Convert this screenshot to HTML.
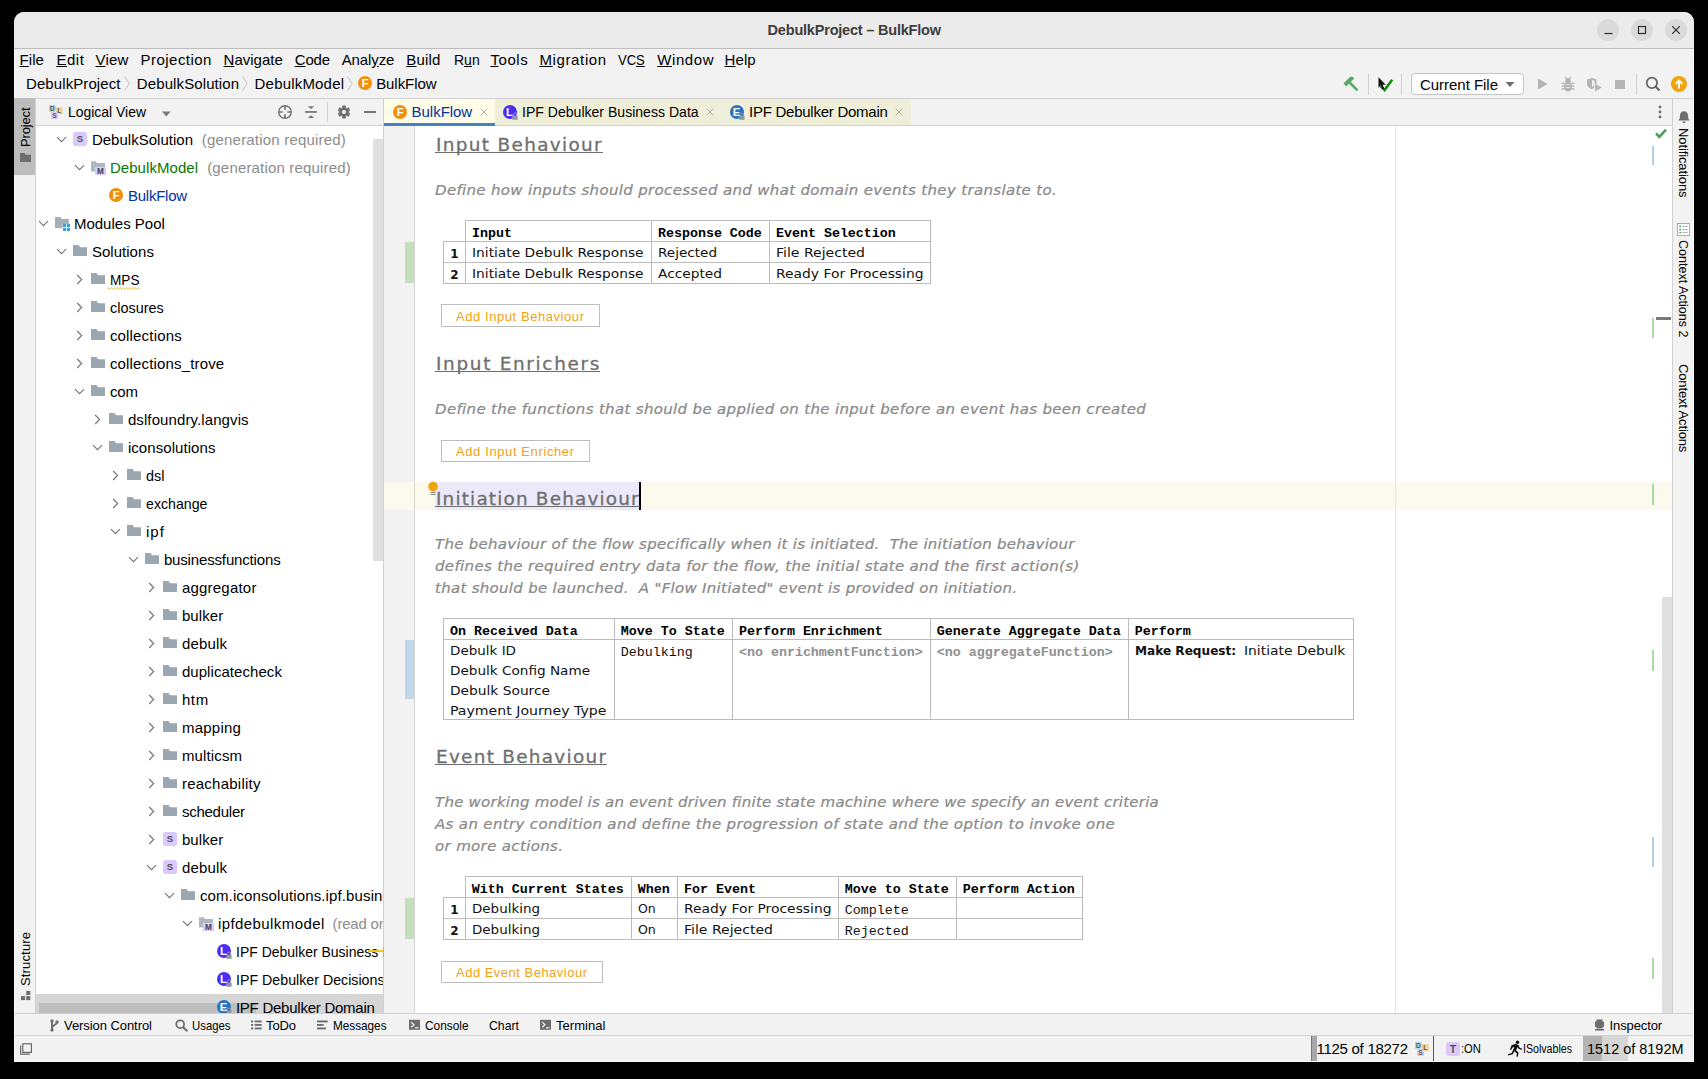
<!DOCTYPE html>
<html lang="en"><head><meta charset="utf-8"><title>DebulkProject – BulkFlow</title>
<style>
html,body{margin:0;padding:0;background:#000;}
body{width:1708px;height:1079px;position:relative;overflow:hidden;font-family:"Liberation Sans",sans-serif;}
.t{position:absolute;white-space:pre;line-height:1;}
div,svg{box-sizing:border-box;}
</style></head><body>
<div style="position:absolute;left:14px;top:12px;width:1680px;height:1050px;background:#f2f2f2;border-radius:10px 10px 0 0;"></div>
<div style="position:absolute;left:14px;top:12px;width:1680px;height:36px;background:#ebebeb;border-radius:10px 10px 0 0;"></div>
<div style="position:absolute;left:14px;top:48px;width:1680px;height:1px;background:#bdbdbd;"></div>
<div style="position:absolute;left:1597px;top:19px;width:22px;height:22px;background:#dadada;border-radius:50%;"></div>
<div style="position:absolute;left:1631px;top:19px;width:22px;height:22px;background:#dadada;border-radius:50%;"></div>
<div style="position:absolute;left:1665px;top:19px;width:22px;height:22px;background:#dadada;border-radius:50%;"></div>
<svg style="position:absolute;left:1597px;top:19px" width="90" height="22" viewBox="0 0 90 22"><g stroke="#2e2e2e" stroke-width="1.2" fill="none"><path d="M7.5 14.5h8"/><rect x="41.5" y="7.5" width="7" height="7"/><path d="M75.2 7.2l7.6 7.6M82.8 7.2l-7.6 7.6"/></g></svg>
<svg style="position:absolute;left:123.2px;top:75px" width="8" height="18" viewBox="0 0 8 18"><path d="M1.500 1.600L6.200 8.600L1.500 15.600" stroke="#c4c4c4" stroke-width="1" fill="none"/></svg>
<svg style="position:absolute;left:241.3px;top:75px" width="8" height="18" viewBox="0 0 8 18"><path d="M1.500 1.600L6.200 8.600L1.500 15.600" stroke="#c4c4c4" stroke-width="1" fill="none"/></svg>
<svg style="position:absolute;left:346.4px;top:75px" width="8" height="18" viewBox="0 0 8 18"><path d="M1.500 1.600L6.200 8.600L1.500 15.600" stroke="#c4c4c4" stroke-width="1" fill="none"/></svg>
<svg style="position:absolute;left:357px;top:75px" width="16" height="16" viewBox="0 0 16 16"><circle cx="8" cy="8" r="7" fill="#f0900a"/><text x="8.3" y="12" text-anchor="middle" font-family="Liberation Sans, sans-serif" font-weight="bold" font-size="11.3" fill="#fff">F</text></svg>
<div style="position:absolute;left:14px;top:98px;width:1680px;height:1px;background:#d1d1d1;"></div>
<svg style="position:absolute;left:1343px;top:76px" width="17" height="17" viewBox="0 0 17 17"><g transform="rotate(-45 8.5 8.5)"><rect x="7.3" y="6" width="2.6" height="11" rx="0.8" fill="#59a869"/><path d="M3.5 2.2h9.5l1.6 1.6v2.4h-11.1z" fill="#59a869"/></g></svg>
<div style="position:absolute;left:1368px;top:74px;width:1px;height:21px;background:#d0d0d0;"></div>
<svg style="position:absolute;left:1377px;top:74px" width="18" height="20" viewBox="0 0 18 20"><path d="M3.600 12.400l4 3.600L15.200 5.800" stroke="#138a13" stroke-width="2.600" fill="none"/><path d="M1.500 3.200v10.500l2.400-2.200l1.800 3.800l1.600-.800l-1.800-3.700h3.200z" fill="#111"/></svg>
<div style="position:absolute;left:1401px;top:74px;width:1px;height:21px;background:#d0d0d0;"></div>
<div style="position:absolute;left:1411px;top:73px;width:113px;height:22px;background:#fff;border:1px solid #c4c4c4;border-radius:4px;"></div>
<svg style="position:absolute;left:1505px;top:81px" width="10" height="7" viewBox="0 0 10 7"><path d="M0.5 1h9L5 6z" fill="#6e6e6e"/></svg>
<svg style="position:absolute;left:1536px;top:77px" width="14" height="14" viewBox="0 0 14 14"><path d="M2 1.5v11l9.5-5.5z" fill="#b4b4b4"/></svg>
<svg style="position:absolute;left:1561px;top:76px" width="14" height="16" viewBox="0 0 14 16"><g fill="#b4b4b4"><ellipse cx="7" cy="10.200" rx="4.100" ry="5.200"/><circle cx="7" cy="4.600" r="2.600"/></g><g stroke="#b4b4b4" stroke-width="1.300" fill="none"><path d="M0.600 7.400h3M0.600 10.200h2.600M0.600 13h3M13.400 7.400h-3M13.400 10.200h-2.600M13.400 13h-3"/><path stroke-width="1.100" d="M3.800 0.600l1.900 2.700M10.200 0.600l-1.900 2.700"/></g><g stroke="#e9e9e9" stroke-width="0.800"><path d="M4.400 8.800h5.200M4.400 11.500h5.200"/></g></svg>
<svg style="position:absolute;left:1586px;top:76px" width="17" height="17" viewBox="0 0 17 17"><path d="M1 3.500L5.800 2L10.600 3.500V7.500C10.600 10.500 8 12.300 5.800 13.200C3.600 12.300 1 10.500 1 7.500z" fill="#b4b4b4"/><path d="M6 4L8.600 4.900V7.500C8.600 9 7.400 10.200 6 11z" fill="#f2f2f2"/><path d="M8.200 7v9.600l7.800-4.800z" fill="#f2f2f2"/><path d="M9.100 7.800v7.600l6.600-3.800z" fill="#b4b4b4"/></svg>
<div style="position:absolute;left:1615px;top:79.5px;width:10px;height:9.5px;background:#b4b4b4;"></div>
<div style="position:absolute;left:1636px;top:74px;width:1px;height:21px;background:#d0d0d0;"></div>
<svg style="position:absolute;left:1645px;top:76px" width="16" height="16" viewBox="0 0 16 16"><circle cx="6.900" cy="6.900" r="5.200" stroke="#666" stroke-width="1.800" fill="none"/><path d="M10.600 10.600l3.800 3.800" stroke="#666" stroke-width="2.100"/></svg>
<svg style="position:absolute;left:1671px;top:76px" width="16" height="16" viewBox="0 0 16 16"><circle cx="8" cy="8" r="8" fill="#f0a30a"/><path d="M8 12.5V5M4.6 8L8 4.4L11.4 8" stroke="#fff" stroke-width="1.9" fill="none"/></svg>
<div style="position:absolute;left:35px;top:99px;width:1px;height:914px;background:#d1d1d1;"></div>
<div style="position:absolute;left:14px;top:98px;width:21px;height:77px;background:#bdbdbd;"></div>
<svg style="position:absolute;left:20px;top:153px" width="11" height="9" viewBox="0 0 11 9"><path d="M0 0h4.600l1 1.700h5.400V9H0z" fill="#6e6e6e"/></svg>
<svg style="position:absolute;left:21px;top:991px" width="10" height="10" viewBox="0 0 10 10"><g fill="#6e6e6e"><rect x="5.200" y="0" width="4.100" height="4"/><rect x="0" y="5.100" width="4.100" height="4"/><rect x="5.200" y="5.100" width="4.100" height="4"/></g></svg>
<div style="position:absolute;left:36px;top:126px;width:347px;height:887px;background:#fff;"></div>
<div style="position:absolute;left:36px;top:125px;width:347px;height:1px;background:#d1d1d1;"></div>
<div style="position:absolute;left:383px;top:99px;width:1px;height:914px;background:#d1d1d1;"></div>
<svg style="position:absolute;left:49px;top:105px" width="14" height="14" viewBox="0 0 14 14"><rect x="0" y="0" width="6.6" height="6.6" fill="#9dd5e6"/><rect x="6.6" y="2.2" width="7" height="7" fill="#f8d08d"/><rect x="2" y="7" width="7" height="7" fill="#dccaf8"/><g font-family="Liberation Sans, sans-serif" font-weight="bold" font-size="6.600" fill="#5a5a5a"><text x="0.900" y="5.800">D</text><text x="8.300" y="8.200">L</text><text x="3.200" y="13.200">S</text></g></svg>
<svg style="position:absolute;left:162px;top:110.5px" width="9" height="6" viewBox="0 0 9 6"><path d="M0 0.5h8.6L4.3 5.5z" fill="#7a7a7a"/></svg>
<svg style="position:absolute;left:277px;top:104px" width="16" height="16" viewBox="0 0 16 16"><g stroke="#757575" fill="none"><circle cx="8" cy="8" r="6.3" stroke-width="1.4"/><path stroke-width="1.7" d="M8 1.7v4M8 10.3v4M1.7 8h4M10.3 8h4"/></g></svg>
<svg style="position:absolute;left:304px;top:104px" width="14" height="16" viewBox="0 0 14 16"><g fill="#757575"><rect x="1" y="7.1" width="12" height="1.7"/><path d="M3.8 2.2h6.4L7 5z"/><path d="M3.8 14h6.4L7 11.200z"/></g></svg>
<div style="position:absolute;left:327px;top:102px;width:1px;height:20px;background:#d0d0d0;"></div>
<svg style="position:absolute;left:335.8px;top:104px" width="16" height="16" viewBox="0 0 16 16"><path fill="#6e6e6e" fill-rule="evenodd" stroke="#6e6e6e" stroke-width="0.5" stroke-linejoin="round" d="M9.61 12.42 L9.42 14.14 L6.58 14.14 L6.39 12.42 L4.98 11.60 L3.39 12.30 L1.98 9.84 L3.37 8.82 L3.37 7.18 L1.98 6.16 L3.39 3.70 L4.98 4.40 L6.39 3.58 L6.58 1.86 L9.42 1.86 L9.61 3.58 L11.02 4.40 L12.61 3.70 L14.02 6.16 L12.63 7.18 L12.63 8.82 L14.02 9.84 L12.61 12.30 L11.02 11.60Z M10.30 8.00 A2.3 2.3 0 1 0 5.70 8.00 A2.3 2.3 0 1 0 10.30 8.00Z"/></svg>
<div style="position:absolute;left:364px;top:111.1px;width:12px;height:1.7px;background:#757575;"></div>
<div style="position:absolute;left:36px;top:994px;width:347px;height:19px;background:#d5d5d5;"></div>
<div style="position:absolute;left:39px;top:1003px;width:217px;height:10px;background:#bebebe;"></div>
<svg style="position:absolute;left:56.0px;top:135.8px" width="11" height="7" viewBox="0 0 11 7"><path d="M1 1.2L5.5 5.6L10 1.2" stroke="#757575" stroke-width="1.15" fill="none"/></svg>
<svg style="position:absolute;left:73px;top:132px" width="14" height="14" viewBox="0 0 14 14"><rect width="14" height="14" rx="2.5" fill="#dcc9fb"/><text x="7" y="10.4" text-anchor="middle" font-family="Liberation Sans, sans-serif" font-weight="bold" font-size="9.5" fill="#4d4d4d">S</text></svg>
<svg style="position:absolute;left:74.0px;top:163.8px" width="11" height="7" viewBox="0 0 11 7"><path d="M1 1.2L5.5 5.6L10 1.2" stroke="#757575" stroke-width="1.15" fill="none"/></svg>
<svg style="position:absolute;left:91px;top:161px" width="15" height="14" viewBox="0 0 15 14"><path d="M0 0.300h4.800l1.200 1.800H14V6H4v4.600H0z" fill="#adb8c0"/><rect x="4" y="6.100" width="11" height="7.900" fill="#dcc9fb"/><text x="9.500" y="13.300" text-anchor="middle" font-family="Liberation Sans, sans-serif" font-weight="bold" font-size="8.200" fill="#3f3f52">M</text></svg>
<svg style="position:absolute;left:108px;top:187px" width="16" height="16" viewBox="0 0 16 16"><circle cx="8" cy="8" r="7" fill="#f0900a"/><text x="8.3" y="12" text-anchor="middle" font-family="Liberation Sans, sans-serif" font-weight="bold" font-size="11.3" fill="#fff">F</text></svg>
<svg style="position:absolute;left:38.0px;top:219.8px" width="11" height="7" viewBox="0 0 11 7"><path d="M1 1.2L5.5 5.6L10 1.2" stroke="#757575" stroke-width="1.15" fill="none"/></svg>
<svg style="position:absolute;left:55px;top:216px" width="15" height="15" viewBox="0 0 15 15"><path d="M0 1h5.200l1.300 2H13.800v5H7.600v4H0z" fill="#a4b0b8"/><g fill="#35a0da"><rect x="8" y="8" width="3.100" height="3.100"/><rect x="11.900" y="8" width="3.100" height="3.100"/><rect x="8" y="11.900" width="3.100" height="3.100"/><rect x="11.900" y="11.900" width="3.100" height="3.100"/></g></svg>
<svg style="position:absolute;left:56.0px;top:247.8px" width="11" height="7" viewBox="0 0 11 7"><path d="M1 1.2L5.5 5.6L10 1.2" stroke="#757575" stroke-width="1.15" fill="none"/></svg>
<svg style="position:absolute;left:73px;top:245px" width="14" height="12" viewBox="0 0 14 12"><path d="M0 0h5.6l1.4 2.2H14V11H0z" fill="#9aa7b0"/></svg>
<svg style="position:absolute;left:76.0px;top:273.8px" width="7" height="11" viewBox="0 0 7 11"><path d="M1.2 1L5.6 5.5L1.2 10" stroke="#757575" stroke-width="1.15" fill="none"/></svg>
<svg style="position:absolute;left:91px;top:273px" width="14" height="12" viewBox="0 0 14 12"><path d="M0 0h5.6l1.4 2.2H14V11H0z" fill="#9aa7b0"/></svg>
<svg style="position:absolute;left:76.0px;top:301.8px" width="7" height="11" viewBox="0 0 7 11"><path d="M1.2 1L5.6 5.5L1.2 10" stroke="#757575" stroke-width="1.15" fill="none"/></svg>
<svg style="position:absolute;left:91px;top:301px" width="14" height="12" viewBox="0 0 14 12"><path d="M0 0h5.6l1.4 2.2H14V11H0z" fill="#9aa7b0"/></svg>
<svg style="position:absolute;left:76.0px;top:329.8px" width="7" height="11" viewBox="0 0 7 11"><path d="M1.2 1L5.6 5.5L1.2 10" stroke="#757575" stroke-width="1.15" fill="none"/></svg>
<svg style="position:absolute;left:91px;top:329px" width="14" height="12" viewBox="0 0 14 12"><path d="M0 0h5.6l1.4 2.2H14V11H0z" fill="#9aa7b0"/></svg>
<svg style="position:absolute;left:76.0px;top:357.8px" width="7" height="11" viewBox="0 0 7 11"><path d="M1.2 1L5.6 5.5L1.2 10" stroke="#757575" stroke-width="1.15" fill="none"/></svg>
<svg style="position:absolute;left:91px;top:357px" width="14" height="12" viewBox="0 0 14 12"><path d="M0 0h5.6l1.4 2.2H14V11H0z" fill="#9aa7b0"/></svg>
<svg style="position:absolute;left:74.0px;top:387.8px" width="11" height="7" viewBox="0 0 11 7"><path d="M1 1.2L5.5 5.6L10 1.2" stroke="#757575" stroke-width="1.15" fill="none"/></svg>
<svg style="position:absolute;left:91px;top:385px" width="14" height="12" viewBox="0 0 14 12"><path d="M0 0h5.6l1.4 2.2H14V11H0z" fill="#9aa7b0"/></svg>
<svg style="position:absolute;left:94.0px;top:413.8px" width="7" height="11" viewBox="0 0 7 11"><path d="M1.2 1L5.6 5.5L1.2 10" stroke="#757575" stroke-width="1.15" fill="none"/></svg>
<svg style="position:absolute;left:109px;top:413px" width="14" height="12" viewBox="0 0 14 12"><path d="M0 0h5.6l1.4 2.2H14V11H0z" fill="#9aa7b0"/></svg>
<svg style="position:absolute;left:92.0px;top:443.8px" width="11" height="7" viewBox="0 0 11 7"><path d="M1 1.2L5.5 5.6L10 1.2" stroke="#757575" stroke-width="1.15" fill="none"/></svg>
<svg style="position:absolute;left:109px;top:441px" width="14" height="12" viewBox="0 0 14 12"><path d="M0 0h5.6l1.4 2.2H14V11H0z" fill="#9aa7b0"/></svg>
<svg style="position:absolute;left:112.0px;top:469.8px" width="7" height="11" viewBox="0 0 7 11"><path d="M1.2 1L5.6 5.5L1.2 10" stroke="#757575" stroke-width="1.15" fill="none"/></svg>
<svg style="position:absolute;left:127px;top:469px" width="14" height="12" viewBox="0 0 14 12"><path d="M0 0h5.6l1.4 2.2H14V11H0z" fill="#9aa7b0"/></svg>
<svg style="position:absolute;left:112.0px;top:497.8px" width="7" height="11" viewBox="0 0 7 11"><path d="M1.2 1L5.6 5.5L1.2 10" stroke="#757575" stroke-width="1.15" fill="none"/></svg>
<svg style="position:absolute;left:127px;top:497px" width="14" height="12" viewBox="0 0 14 12"><path d="M0 0h5.6l1.4 2.2H14V11H0z" fill="#9aa7b0"/></svg>
<svg style="position:absolute;left:110.0px;top:527.8px" width="11" height="7" viewBox="0 0 11 7"><path d="M1 1.2L5.5 5.6L10 1.2" stroke="#757575" stroke-width="1.15" fill="none"/></svg>
<svg style="position:absolute;left:127px;top:525px" width="14" height="12" viewBox="0 0 14 12"><path d="M0 0h5.6l1.4 2.2H14V11H0z" fill="#9aa7b0"/></svg>
<svg style="position:absolute;left:128.0px;top:555.8px" width="11" height="7" viewBox="0 0 11 7"><path d="M1 1.2L5.5 5.6L10 1.2" stroke="#757575" stroke-width="1.15" fill="none"/></svg>
<svg style="position:absolute;left:145px;top:553px" width="14" height="12" viewBox="0 0 14 12"><path d="M0 0h5.6l1.4 2.2H14V11H0z" fill="#9aa7b0"/></svg>
<svg style="position:absolute;left:148.0px;top:581.8px" width="7" height="11" viewBox="0 0 7 11"><path d="M1.2 1L5.6 5.5L1.2 10" stroke="#757575" stroke-width="1.15" fill="none"/></svg>
<svg style="position:absolute;left:163px;top:581px" width="14" height="12" viewBox="0 0 14 12"><path d="M0 0h5.6l1.4 2.2H14V11H0z" fill="#9aa7b0"/></svg>
<svg style="position:absolute;left:148.0px;top:609.8px" width="7" height="11" viewBox="0 0 7 11"><path d="M1.2 1L5.6 5.5L1.2 10" stroke="#757575" stroke-width="1.15" fill="none"/></svg>
<svg style="position:absolute;left:163px;top:609px" width="14" height="12" viewBox="0 0 14 12"><path d="M0 0h5.6l1.4 2.2H14V11H0z" fill="#9aa7b0"/></svg>
<svg style="position:absolute;left:148.0px;top:637.8px" width="7" height="11" viewBox="0 0 7 11"><path d="M1.2 1L5.6 5.5L1.2 10" stroke="#757575" stroke-width="1.15" fill="none"/></svg>
<svg style="position:absolute;left:163px;top:637px" width="14" height="12" viewBox="0 0 14 12"><path d="M0 0h5.6l1.4 2.2H14V11H0z" fill="#9aa7b0"/></svg>
<svg style="position:absolute;left:148.0px;top:665.8px" width="7" height="11" viewBox="0 0 7 11"><path d="M1.2 1L5.6 5.5L1.2 10" stroke="#757575" stroke-width="1.15" fill="none"/></svg>
<svg style="position:absolute;left:163px;top:665px" width="14" height="12" viewBox="0 0 14 12"><path d="M0 0h5.6l1.4 2.2H14V11H0z" fill="#9aa7b0"/></svg>
<svg style="position:absolute;left:148.0px;top:693.8px" width="7" height="11" viewBox="0 0 7 11"><path d="M1.2 1L5.6 5.5L1.2 10" stroke="#757575" stroke-width="1.15" fill="none"/></svg>
<svg style="position:absolute;left:163px;top:693px" width="14" height="12" viewBox="0 0 14 12"><path d="M0 0h5.6l1.4 2.2H14V11H0z" fill="#9aa7b0"/></svg>
<svg style="position:absolute;left:148.0px;top:721.8px" width="7" height="11" viewBox="0 0 7 11"><path d="M1.2 1L5.6 5.5L1.2 10" stroke="#757575" stroke-width="1.15" fill="none"/></svg>
<svg style="position:absolute;left:163px;top:721px" width="14" height="12" viewBox="0 0 14 12"><path d="M0 0h5.6l1.4 2.2H14V11H0z" fill="#9aa7b0"/></svg>
<svg style="position:absolute;left:148.0px;top:749.8px" width="7" height="11" viewBox="0 0 7 11"><path d="M1.2 1L5.6 5.5L1.2 10" stroke="#757575" stroke-width="1.15" fill="none"/></svg>
<svg style="position:absolute;left:163px;top:749px" width="14" height="12" viewBox="0 0 14 12"><path d="M0 0h5.6l1.4 2.2H14V11H0z" fill="#9aa7b0"/></svg>
<svg style="position:absolute;left:148.0px;top:777.8px" width="7" height="11" viewBox="0 0 7 11"><path d="M1.2 1L5.6 5.5L1.2 10" stroke="#757575" stroke-width="1.15" fill="none"/></svg>
<svg style="position:absolute;left:163px;top:777px" width="14" height="12" viewBox="0 0 14 12"><path d="M0 0h5.6l1.4 2.2H14V11H0z" fill="#9aa7b0"/></svg>
<svg style="position:absolute;left:148.0px;top:805.8px" width="7" height="11" viewBox="0 0 7 11"><path d="M1.2 1L5.6 5.5L1.2 10" stroke="#757575" stroke-width="1.15" fill="none"/></svg>
<svg style="position:absolute;left:163px;top:805px" width="14" height="12" viewBox="0 0 14 12"><path d="M0 0h5.6l1.4 2.2H14V11H0z" fill="#9aa7b0"/></svg>
<svg style="position:absolute;left:148.0px;top:833.8px" width="7" height="11" viewBox="0 0 7 11"><path d="M1.2 1L5.6 5.5L1.2 10" stroke="#757575" stroke-width="1.15" fill="none"/></svg>
<svg style="position:absolute;left:163px;top:832px" width="14" height="14" viewBox="0 0 14 14"><rect width="14" height="14" rx="2.5" fill="#dcc9fb"/><text x="7" y="10.4" text-anchor="middle" font-family="Liberation Sans, sans-serif" font-weight="bold" font-size="9.5" fill="#4d4d4d">S</text></svg>
<svg style="position:absolute;left:146.0px;top:863.8px" width="11" height="7" viewBox="0 0 11 7"><path d="M1 1.2L5.5 5.6L10 1.2" stroke="#757575" stroke-width="1.15" fill="none"/></svg>
<svg style="position:absolute;left:163px;top:860px" width="14" height="14" viewBox="0 0 14 14"><rect width="14" height="14" rx="2.5" fill="#dcc9fb"/><text x="7" y="10.4" text-anchor="middle" font-family="Liberation Sans, sans-serif" font-weight="bold" font-size="9.5" fill="#4d4d4d">S</text></svg>
<svg style="position:absolute;left:164.0px;top:891.8px" width="11" height="7" viewBox="0 0 11 7"><path d="M1 1.2L5.5 5.6L10 1.2" stroke="#757575" stroke-width="1.15" fill="none"/></svg>
<svg style="position:absolute;left:181px;top:889px" width="14" height="12" viewBox="0 0 14 12"><path d="M0 0h5.6l1.4 2.2H14V11H0z" fill="#9aa7b0"/></svg>
<svg style="position:absolute;left:182.0px;top:919.8px" width="11" height="7" viewBox="0 0 11 7"><path d="M1 1.2L5.5 5.6L10 1.2" stroke="#757575" stroke-width="1.15" fill="none"/></svg>
<svg style="position:absolute;left:199px;top:917px" width="15" height="14" viewBox="0 0 15 14"><path d="M0 0.300h4.800l1.200 1.800H14V6H4v4.600H0z" fill="#adb8c0"/><rect x="4" y="6.100" width="11" height="7.900" fill="#dcc9fb"/><text x="9.500" y="13.300" text-anchor="middle" font-family="Liberation Sans, sans-serif" font-weight="bold" font-size="8.200" fill="#3f3f52">M</text></svg>
<svg style="position:absolute;left:216px;top:943px" width="17" height="17" viewBox="0 0 17 17"><circle cx="8" cy="8" r="7" fill="#4b2ef3"/><text x="7.5" y="12" text-anchor="middle" font-family="Liberation Sans, sans-serif" font-weight="bold" font-size="11.3" fill="#fff">L</text><rect x="10.4" y="11.6" width="5.2" height="4.2" fill="#8d99a3"/><path d="M11.5 11.8v-1.300a1.500 1.500 0 013 0v1.300" stroke="#8d99a3" stroke-width="1" fill="none"/></svg>
<svg style="position:absolute;left:216px;top:971px" width="17" height="17" viewBox="0 0 17 17"><circle cx="8" cy="8" r="7" fill="#4b2ef3"/><text x="7.5" y="12" text-anchor="middle" font-family="Liberation Sans, sans-serif" font-weight="bold" font-size="11.3" fill="#fff">L</text><rect x="10.4" y="11.6" width="5.2" height="4.2" fill="#8d99a3"/><path d="M11.5 11.8v-1.300a1.500 1.500 0 013 0v1.300" stroke="#8d99a3" stroke-width="1" fill="none"/></svg>
<svg style="position:absolute;left:216px;top:999px" width="17" height="17" viewBox="0 0 17 17"><circle cx="8" cy="8" r="7" fill="#2672c0"/><text x="7.5" y="12" text-anchor="middle" font-family="Liberation Sans, sans-serif" font-weight="bold" font-size="11.3" fill="#fff">E</text><rect x="10.4" y="11.6" width="5.2" height="4.2" fill="#8d99a3"/><path d="M11.5 11.8v-1.300a1.500 1.500 0 013 0v1.300" stroke="#8d99a3" stroke-width="1" fill="none"/></svg>
<svg style="position:absolute;left:107px;top:287px" width="34" height="4" viewBox="0 0 34 4"><path d="M0 2.5 l1.5 -2 l1.5 2 l1.5 -2 l1.5 2 l1.5 -2 l1.5 2 l1.5 -2 l1.5 2 l1.5 -2 l1.5 2 l1.5 -2 l1.5 2 l1.5 -2 l1.5 2 l1.5 -2 l1.5 2 l1.5 -2 l1.5 2 l1.5 -2 l1.5 2 l1.5 -2 l1.5 2" stroke="#e6c84a" stroke-width="0.9" fill="none"/></svg>
<div style="position:absolute;left:373px;top:139px;width:10px;height:422px;background:#e0e0e0;"></div>
<div style="position:absolute;left:384px;top:99px;width:111px;height:27px;background:#fffde7;"></div>
<div style="position:absolute;left:495px;top:99px;width:416px;height:26px;background:#efefd9;"></div>
<div style="position:absolute;left:384px;top:125px;width:1288px;height:1px;background:#d1d1d1;"></div>
<div style="position:absolute;left:384px;top:123px;width:111px;height:3px;background:#4083c9;"></div>
<svg style="position:absolute;left:391.8px;top:104px" width="16" height="16" viewBox="0 0 16 16"><circle cx="8" cy="8" r="7" fill="#f0900a"/><text x="8.3" y="12" text-anchor="middle" font-family="Liberation Sans, sans-serif" font-weight="bold" font-size="11.3" fill="#fff">F</text></svg>
<svg style="position:absolute;left:501.5px;top:104px" width="17" height="17" viewBox="0 0 17 17"><circle cx="8" cy="8" r="7" fill="#4b2ef3"/><text x="7.5" y="12" text-anchor="middle" font-family="Liberation Sans, sans-serif" font-weight="bold" font-size="11.3" fill="#fff">L</text><rect x="10.4" y="11.6" width="5.2" height="4.2" fill="#8d99a3"/><path d="M11.5 11.8v-1.300a1.500 1.500 0 013 0v1.300" stroke="#8d99a3" stroke-width="1" fill="none"/></svg>
<svg style="position:absolute;left:728.6px;top:104px" width="17" height="17" viewBox="0 0 17 17"><circle cx="8" cy="8" r="7" fill="#2672c0"/><text x="7.5" y="12" text-anchor="middle" font-family="Liberation Sans, sans-serif" font-weight="bold" font-size="11.3" fill="#fff">E</text><rect x="10.4" y="11.6" width="5.2" height="4.2" fill="#8d99a3"/><path d="M11.5 11.8v-1.300a1.500 1.500 0 013 0v1.300" stroke="#8d99a3" stroke-width="1" fill="none"/></svg>
<svg style="position:absolute;left:479.5px;top:108px" width="8" height="8" viewBox="0 0 8 8"><path d="M0.7 0.7l6.6 6.6M7.3 0.7l-6.6 6.6" stroke="#b0b0b0" stroke-width="1" fill="none"/></svg>
<svg style="position:absolute;left:706px;top:108px" width="8" height="8" viewBox="0 0 8 8"><path d="M0.7 0.7l6.6 6.6M7.3 0.7l-6.6 6.6" stroke="#b0b0b0" stroke-width="1" fill="none"/></svg>
<svg style="position:absolute;left:895px;top:108px" width="8" height="8" viewBox="0 0 8 8"><path d="M0.7 0.7l6.6 6.6M7.3 0.7l-6.6 6.6" stroke="#b0b0b0" stroke-width="1" fill="none"/></svg>
<svg style="position:absolute;left:1657px;top:104px" width="6" height="16" viewBox="0 0 6 16"><g fill="#6e6e6e"><circle cx="3" cy="3" r="1.4"/><circle cx="3" cy="8" r="1.4"/><circle cx="3" cy="13" r="1.4"/></g></svg>
<div style="position:absolute;left:384px;top:126px;width:1288px;height:887px;background:#fff;"></div>
<div style="position:absolute;left:384px;top:126px;width:30px;height:887px;background:#f2f2f2;"></div>
<div style="position:absolute;left:414px;top:126px;width:1px;height:887px;background:#d4d4d4;"></div>
<div style="position:absolute;left:384px;top:482px;width:1288px;height:28px;background:#fcfaed;"></div>
<div style="position:absolute;left:414px;top:482px;width:1px;height:28px;background:#dcdacb;"></div>
<div style="position:absolute;left:1395px;top:126px;width:1px;height:887px;background:#e3e3e3;"></div>
<div style="position:absolute;left:1662px;top:597px;width:10px;height:416px;background:#dfdfdf;"></div>
<div style="position:absolute;left:435px;top:482px;width:204.5px;height:28px;background:#ece9fb;"></div>
<div style="position:absolute;left:639.3px;top:482px;width:1.8px;height:28px;background:#000;"></div>
<div style="position:absolute;left:435.3px;top:151.8px;width:167.4px;height:1.3px;background:#6e6e6e;"></div>
<div style="position:absolute;left:435.3px;top:370.8px;width:165.20000000000002px;height:1.3px;background:#6e6e6e;"></div>
<div style="position:absolute;left:435.3px;top:505.8px;width:204.4px;height:1.3px;background:#6e6e6e;"></div>
<div style="position:absolute;left:435.3px;top:763.8px;width:171.8px;height:1.3px;background:#6e6e6e;"></div>
<svg style="position:absolute;left:427px;top:481px" width="12" height="16" viewBox="0 0 12 16"><circle cx="6" cy="5.6" r="4.8" fill="#f0a30a"/><path d="M3.6 11.4h4.8M3.6 13.4h4.8" stroke="#7a7a7a" stroke-width="1"/></svg>
<div style="position:absolute;left:405px;top:241.5px;width:9px;height:41.5px;background:#c5dfbd;"></div>
<div style="position:absolute;left:405px;top:639.5px;width:9px;height:59.5px;background:#c2d6ea;"></div>
<div style="position:absolute;left:405px;top:897.5px;width:9px;height:41.5px;background:#c5dfbd;"></div>
<div style="position:absolute;left:465.5px;top:220.0px;width:465.0px;height:1px;background:#bcbcbc;"></div>
<div style="position:absolute;left:443.5px;top:241.0px;width:487.0px;height:1px;background:#bcbcbc;"></div>
<div style="position:absolute;left:443.5px;top:262.0px;width:487.0px;height:1px;background:#bcbcbc;"></div>
<div style="position:absolute;left:443.5px;top:283.0px;width:487.0px;height:1px;background:#bcbcbc;"></div>
<div style="position:absolute;left:443.0px;top:241.0px;width:1px;height:43.0px;background:#bcbcbc;"></div>
<div style="position:absolute;left:465.0px;top:220.0px;width:1px;height:64.0px;background:#bcbcbc;"></div>
<div style="position:absolute;left:651.0px;top:220.0px;width:1px;height:64.0px;background:#bcbcbc;"></div>
<div style="position:absolute;left:769.0px;top:220.0px;width:1px;height:64.0px;background:#bcbcbc;"></div>
<div style="position:absolute;left:930.0px;top:220.0px;width:1px;height:64.0px;background:#bcbcbc;"></div>
<div style="position:absolute;left:443.5px;top:618.0px;width:910.0px;height:1px;background:#bcbcbc;"></div>
<div style="position:absolute;left:443.5px;top:639.0px;width:910.0px;height:1px;background:#bcbcbc;"></div>
<div style="position:absolute;left:443.5px;top:719.0px;width:910.0px;height:1px;background:#bcbcbc;"></div>
<div style="position:absolute;left:443.0px;top:618.0px;width:1px;height:102.0px;background:#bcbcbc;"></div>
<div style="position:absolute;left:614.0px;top:618.0px;width:1px;height:102.0px;background:#bcbcbc;"></div>
<div style="position:absolute;left:732.0px;top:618.0px;width:1px;height:102.0px;background:#bcbcbc;"></div>
<div style="position:absolute;left:930.0px;top:618.0px;width:1px;height:102.0px;background:#bcbcbc;"></div>
<div style="position:absolute;left:1128.0px;top:618.0px;width:1px;height:102.0px;background:#bcbcbc;"></div>
<div style="position:absolute;left:1353.0px;top:618.0px;width:1px;height:102.0px;background:#bcbcbc;"></div>
<div style="position:absolute;left:465.5px;top:876.0px;width:617.0px;height:1px;background:#bcbcbc;"></div>
<div style="position:absolute;left:443.5px;top:897.0px;width:639.0px;height:1px;background:#bcbcbc;"></div>
<div style="position:absolute;left:443.5px;top:918.0px;width:639.0px;height:1px;background:#bcbcbc;"></div>
<div style="position:absolute;left:443.5px;top:939.0px;width:639.0px;height:1px;background:#bcbcbc;"></div>
<div style="position:absolute;left:443.0px;top:897.0px;width:1px;height:43.0px;background:#bcbcbc;"></div>
<div style="position:absolute;left:465.0px;top:876.0px;width:1px;height:64.0px;background:#bcbcbc;"></div>
<div style="position:absolute;left:631.0px;top:876.0px;width:1px;height:64.0px;background:#bcbcbc;"></div>
<div style="position:absolute;left:677.0px;top:876.0px;width:1px;height:64.0px;background:#bcbcbc;"></div>
<div style="position:absolute;left:838.0px;top:876.0px;width:1px;height:64.0px;background:#bcbcbc;"></div>
<div style="position:absolute;left:956.0px;top:876.0px;width:1px;height:64.0px;background:#bcbcbc;"></div>
<div style="position:absolute;left:1082.0px;top:876.0px;width:1px;height:64.0px;background:#bcbcbc;"></div>
<div style="position:absolute;left:441px;top:304px;width:159px;height:22.5px;background:#fff;border:1px solid #bdbdbd;"></div>
<div style="position:absolute;left:441px;top:439.5px;width:149px;height:22.5px;background:#fff;border:1px solid #bdbdbd;"></div>
<div style="position:absolute;left:441px;top:960.5px;width:162px;height:22.5px;background:#fff;border:1px solid #bdbdbd;"></div>
<svg style="position:absolute;left:1654px;top:127px" width="14" height="12" viewBox="0 0 14 12"><path d="M2 6.5l3.4 3.3L12 2.6" stroke="#4f9e5f" stroke-width="2.6" fill="none"/></svg>
<div style="position:absolute;left:1652px;top:146px;width:2px;height:19px;background:#b6cdea;"></div>
<div style="position:absolute;left:1652px;top:318px;width:2px;height:20px;background:#a5dca0;"></div>
<div style="position:absolute;left:1652px;top:484px;width:2px;height:21px;background:#a5dca0;"></div>
<div style="position:absolute;left:1652px;top:650px;width:2px;height:21px;background:#a5dca0;"></div>
<div style="position:absolute;left:1652px;top:837px;width:2px;height:30px;background:#b6cdea;"></div>
<div style="position:absolute;left:1652px;top:958px;width:2px;height:21px;background:#a5dca0;"></div>
<div style="position:absolute;left:1656px;top:316.5px;width:15px;height:3px;background:#7a7a7a;"></div>
<div style="position:absolute;left:1672px;top:99px;width:1px;height:914px;background:#d1d1d1;"></div>
<svg style="position:absolute;left:1677.5px;top:110.5px" width="12" height="13" viewBox="0 0 12 13"><path d="M6 0.300C3.300 0.300 1.900 2.400 1.900 5L1.700 7.400L0.400 9.400H11.600L10.300 7.400L10.100 5C10.100 2.400 8.700 0.300 6 0.300z" fill="#6e6e6e"/><path d="M4.300 10.600h3.400a1.700 1.700 0 0 1-3.400 0z" fill="#6e6e6e"/></svg>
<svg style="position:absolute;left:1677px;top:223px" width="13" height="13" viewBox="0 0 13 13"><rect x="0.5" y="0.500" width="12" height="12" fill="#fff" stroke="#9a9a9a" stroke-width="0.8"/><g fill="#59a869"><rect x="2.300" y="2.600" width="1.800" height="1.600"/><rect x="2.300" y="5.700" width="1.800" height="1.600"/><rect x="2.300" y="8.800" width="1.800" height="1.600"/></g><g fill="#b0b0b0"><rect x="5.200" y="2.900" width="5.500" height="1"/><rect x="5.200" y="6" width="5.500" height="1"/><rect x="5.200" y="9.100" width="5.500" height="1"/></g></svg>
<div style="position:absolute;left:14px;top:1013px;width:1680px;height:49px;background:#f2f2f2;"></div>
<div style="position:absolute;left:14px;top:1013px;width:1680px;height:1px;background:#d1d1d1;"></div>
<div style="position:absolute;left:14px;top:1035px;width:1680px;height:1px;background:#d1d1d1;"></div>
<svg style="position:absolute;left:48.5px;top:1019px" width="11" height="13" viewBox="0 0 11 13"><g stroke="#6e6e6e" stroke-width="1.900" fill="none"><path d="M3 1.500v10"/><path d="M8 3c0 3.800-5 2.600-5 6"/></g><g fill="#6e6e6e"><circle cx="3" cy="2" r="1.700"/><circle cx="3" cy="11" r="1.700"/><circle cx="8" cy="3" r="1.700"/></g></svg>
<svg style="position:absolute;left:174.5px;top:1019px" width="14" height="14" viewBox="0 0 14 14"><circle cx="5.200" cy="5.200" r="3.900" stroke="#6e6e6e" stroke-width="1.800" fill="none"/><path d="M8 8l4.300 4.300" stroke="#6e6e6e" stroke-width="2.100"/></svg>
<svg style="position:absolute;left:250.5px;top:1020px" width="12" height="10" viewBox="0 0 12 10"><g fill="#6e6e6e"><rect x="0" y="0.500" width="2.200" height="1.900"/><rect x="0" y="4" width="2.200" height="1.900"/><rect x="0" y="7.500" width="2.200" height="1.900"/><rect x="3.700" y="0.500" width="7" height="1.900"/><rect x="3.700" y="4" width="7" height="1.900"/><rect x="3.700" y="7.500" width="7" height="1.900"/></g></svg>
<svg style="position:absolute;left:317px;top:1020px" width="12" height="10" viewBox="0 0 12 10"><g fill="#6e6e6e"><rect x="0" y="0.500" width="10.800" height="1.900"/><rect x="0" y="4" width="6.600" height="1.900"/><rect x="0" y="7.500" width="9" height="1.900"/></g></svg>
<svg style="position:absolute;left:409px;top:1019px" width="12" height="12" viewBox="0 0 12 12"><rect x="0" y="0.800" width="11" height="10" fill="#6e6e6e"/><path d="M2.300 3.200l2.700 2.500l-2.700 2.500" stroke="#f2f2f2" stroke-width="1.200" fill="none"/><path d="M6 8.800h3.500" stroke="#f2f2f2" stroke-width="1.200"/></svg>
<svg style="position:absolute;left:540px;top:1019px" width="12" height="12" viewBox="0 0 12 12"><rect x="0" y="0.800" width="11" height="10" fill="#6e6e6e"/><path d="M2.300 3.200l2.700 2.500l-2.700 2.500" stroke="#f2f2f2" stroke-width="1.200" fill="none"/><path d="M6 8.800h3.500" stroke="#f2f2f2" stroke-width="1.200"/></svg>
<svg style="position:absolute;left:1594px;top:1019px" width="11" height="12" viewBox="0 0 11 12"><path d="M2.500 0.500h6v2h1.500v5.500h-1.500v1.500h-6v-1.500h-1.500v-5.500h1.500z" fill="#6e6e6e"/><rect x="1" y="10" width="9" height="1.600" fill="#6e6e6e"/></svg>
<svg style="position:absolute;left:20px;top:1043px" width="13" height="13" viewBox="0 0 13 13"><g stroke="#6a6a6a" stroke-width="1.200" fill="none"><rect x="2.800" y="0.800" width="8.600" height="8.600"/><path d="M0.700 2.500V11.200H9.800"/></g></svg>
<div style="position:absolute;left:1311px;top:1036px;width:5.5px;height:26px;background:#a8a8a8;"></div>
<div style="position:absolute;left:1310.5px;top:1036px;width:1px;height:26px;background:#777;"></div>
<svg style="position:absolute;left:1415px;top:1042px" width="14" height="14" viewBox="0 0 14 14"><rect x="0" y="0" width="6.6" height="6.6" fill="#9dd5e6"/><rect x="6.6" y="2.2" width="7" height="7" fill="#f8d08d"/><rect x="2" y="7" width="7" height="7" fill="#dccaf8"/><g font-family="Liberation Sans, sans-serif" font-weight="bold" font-size="6.600" fill="#5a5a5a"><text x="0.900" y="5.800">D</text><text x="8.300" y="8.200">L</text><text x="3.200" y="13.200">S</text></g></svg>
<div style="position:absolute;left:1433px;top:1036px;width:1px;height:26px;background:#5a5a5a;"></div>
<svg style="position:absolute;left:1446px;top:1042px" width="14" height="14" viewBox="0 0 14 14"><rect width="14" height="14" rx="2.500" fill="#dcc9fb"/><text x="7" y="10.800" text-anchor="middle" font-family="Liberation Sans, sans-serif" font-weight="bold" font-size="10.500" fill="#4d4d4d">T</text></svg>
<svg style="position:absolute;left:1507px;top:1040px" width="16" height="17" viewBox="0 0 16 17"><g fill="#111"><circle cx="10.500" cy="2.200" r="1.700"/><path d="M4.500 5.200l4.500-1.400l2.600 1.500l1.300 2.600l2.300.6l-.3 1.200l-3-.6l-1.300-1.900l-1.500 3l2.400 2.600l-.7 4l-1.400-.2l.5-3.200l-2.600-2.200l-1.500 3l-4.600 1.300l-.4-1.300l3.900-1.300l2.700-6l-1.900.5l-1.300 2.600l-1.200-.5z"/></g></svg>
<div style="position:absolute;left:1583px;top:1036px;width:18.5px;height:26px;background:#b3b3b3;"></div>
<div style="position:absolute;left:1601.5px;top:1036px;width:26.5px;height:26px;background:#d6d6d6;"></div>
<span class="t" style="left:767.60px;top:23.00px;font-family:'Liberation Sans', sans-serif;font-size:14.5px;font-weight:bold;color:#3d3d3d;letter-spacing:-0.203px;">DebulkProject – BulkFlow</span>
<span class="t" style="left:19.50px;top:52.00px;font-family:'Liberation Sans', sans-serif;font-size:15px;color:#000;letter-spacing:0.076px;text-underline-offset:1px;text-decoration-thickness:1px;"><u>F</u>ile</span>
<span class="t" style="left:56.40px;top:52.00px;font-family:'Liberation Sans', sans-serif;font-size:15px;color:#000;letter-spacing:0.547px;text-underline-offset:1px;text-decoration-thickness:1px;"><u>E</u>dit</span>
<span class="t" style="left:95.50px;top:52.00px;font-family:'Liberation Sans', sans-serif;font-size:15px;color:#000;letter-spacing:0.217px;text-underline-offset:1px;text-decoration-thickness:1px;"><u>V</u>iew</span>
<span class="t" style="left:140.60px;top:52.00px;font-family:'Liberation Sans', sans-serif;font-size:15px;color:#000;letter-spacing:0.455px;text-underline-offset:1px;text-decoration-thickness:1px;">Projection</span>
<span class="t" style="left:223.60px;top:52.00px;font-family:'Liberation Sans', sans-serif;font-size:15px;color:#000;text-underline-offset:1px;text-decoration-thickness:1px;"><u>N</u>avigate</span>
<span class="t" style="left:294.80px;top:52.00px;font-family:'Liberation Sans', sans-serif;font-size:15px;color:#000;letter-spacing:-0.220px;text-underline-offset:1px;text-decoration-thickness:1px;"><u>C</u>ode</span>
<span class="t" style="left:341.70px;top:52.00px;font-family:'Liberation Sans', sans-serif;font-size:15px;color:#000;letter-spacing:-0.112px;text-underline-offset:1px;text-decoration-thickness:1px;">Anal<u>y</u>ze</span>
<span class="t" style="left:406.30px;top:52.00px;font-family:'Liberation Sans', sans-serif;font-size:15px;color:#000;letter-spacing:0.185px;text-underline-offset:1px;text-decoration-thickness:1px;"><u>B</u>uild</span>
<span class="t" style="left:453.70px;top:52.00px;font-family:'Liberation Sans', sans-serif;font-size:15px;color:#000;transform-origin:0 0;transform:scaleX(0.9335);text-underline-offset:1px;text-decoration-thickness:1px;">R<u>u</u>n</span>
<span class="t" style="left:490.40px;top:52.00px;font-family:'Liberation Sans', sans-serif;font-size:15px;color:#000;letter-spacing:0.567px;text-underline-offset:1px;text-decoration-thickness:1px;"><u>T</u>ools</span>
<span class="t" style="left:539.40px;top:52.00px;font-family:'Liberation Sans', sans-serif;font-size:15px;color:#000;letter-spacing:0.637px;text-underline-offset:1px;text-decoration-thickness:1px;"><u>M</u>igration</span>
<span class="t" style="left:618.30px;top:52.00px;font-family:'Liberation Sans', sans-serif;font-size:15px;color:#000;transform-origin:0 0;transform:scaleX(0.8689);text-underline-offset:1px;text-decoration-thickness:1px;">VC<u>S</u></span>
<span class="t" style="left:657.20px;top:52.00px;font-family:'Liberation Sans', sans-serif;font-size:15px;color:#000;letter-spacing:0.608px;text-underline-offset:1px;text-decoration-thickness:1px;"><u>W</u>indow</span>
<span class="t" style="left:724.50px;top:52.00px;font-family:'Liberation Sans', sans-serif;font-size:15px;color:#000;letter-spacing:0.114px;text-underline-offset:1px;text-decoration-thickness:1px;"><u>H</u>elp</span>
<span class="t" style="left:26.00px;top:76.00px;font-family:'Liberation Sans', sans-serif;font-size:15px;color:#000;letter-spacing:0.092px;">DebulkProject</span>
<span class="t" style="left:136.80px;top:76.00px;font-family:'Liberation Sans', sans-serif;font-size:15px;color:#000;letter-spacing:0.107px;">DebulkSolution</span>
<span class="t" style="left:254.60px;top:76.00px;font-family:'Liberation Sans', sans-serif;font-size:15px;color:#000;letter-spacing:0.185px;">DebulkModel</span>
<span class="t" style="left:376.20px;top:76.00px;font-family:'Liberation Sans', sans-serif;font-size:15px;color:#000;letter-spacing:-0.080px;">BulkFlow</span>
<span class="t" style="left:1420.00px;top:76.80px;font-family:'Liberation Sans', sans-serif;font-size:15px;color:#000;letter-spacing:-0.033px;">Current File</span>
<span class="t" style="left:30.20px;top:136.00px;font-family:'Liberation Sans', sans-serif;font-size:13px;color:#000;letter-spacing:-0.161px;transform-origin:0 11.00px;transform:rotate(-90deg);">Project</span>
<span class="t" style="left:30.20px;top:974.50px;font-family:'Liberation Sans', sans-serif;font-size:13px;color:#000;letter-spacing:0.156px;transform-origin:0 11.00px;transform:rotate(-90deg);">Structure</span>
<span class="t" style="left:68.00px;top:103.60px;font-family:'Liberation Sans', sans-serif;font-size:15px;color:#000;transform-origin:0 0;transform:scaleX(0.9291);">Logical View</span>
<span class="t" style="left:91.90px;top:131.60px;font-family:'Liberation Sans', sans-serif;font-size:15px;color:#000;letter-spacing:0.015px;">DebulkSolution</span>
<span class="t" style="left:109.90px;top:159.60px;font-family:'Liberation Sans', sans-serif;font-size:15px;color:#0a7700;letter-spacing:0.065px;">DebulkModel</span>
<span class="t" style="left:127.90px;top:187.60px;font-family:'Liberation Sans', sans-serif;font-size:15px;color:#0032a0;letter-spacing:-0.223px;">BulkFlow</span>
<span class="t" style="left:73.90px;top:215.60px;font-family:'Liberation Sans', sans-serif;font-size:15px;color:#000;letter-spacing:0.010px;">Modules Pool</span>
<span class="t" style="left:91.90px;top:243.60px;font-family:'Liberation Sans', sans-serif;font-size:15px;color:#000;letter-spacing:0.035px;">Solutions</span>
<span class="t" style="left:109.90px;top:271.60px;font-family:'Liberation Sans', sans-serif;font-size:15px;color:#000;transform-origin:0 0;transform:scaleX(0.9073);">MPS</span>
<span class="t" style="left:109.90px;top:299.60px;font-family:'Liberation Sans', sans-serif;font-size:15px;color:#000;transform-origin:0 0;transform:scaleX(0.9631);">closures</span>
<span class="t" style="left:109.90px;top:327.60px;font-family:'Liberation Sans', sans-serif;font-size:15px;color:#000;letter-spacing:0.175px;">collections</span>
<span class="t" style="left:109.90px;top:355.60px;font-family:'Liberation Sans', sans-serif;font-size:15px;color:#000;letter-spacing:0.160px;">collections_trove</span>
<span class="t" style="left:109.90px;top:383.60px;font-family:'Liberation Sans', sans-serif;font-size:15px;color:#000;letter-spacing:-0.172px;">com</span>
<span class="t" style="left:127.90px;top:411.60px;font-family:'Liberation Sans', sans-serif;font-size:15px;color:#000;letter-spacing:0.103px;">dslfoundry.langvis</span>
<span class="t" style="left:127.90px;top:439.60px;font-family:'Liberation Sans', sans-serif;font-size:15px;color:#000;letter-spacing:0.065px;">iconsolutions</span>
<span class="t" style="left:145.90px;top:467.60px;font-family:'Liberation Sans', sans-serif;font-size:15px;color:#000;transform-origin:0 0;transform:scaleX(0.9590);">dsl</span>
<span class="t" style="left:145.90px;top:495.60px;font-family:'Liberation Sans', sans-serif;font-size:15px;color:#000;transform-origin:0 0;transform:scaleX(0.9452);">exchange</span>
<span class="t" style="left:145.90px;top:523.60px;font-family:'Liberation Sans', sans-serif;font-size:15px;color:#000;letter-spacing:1.078px;">ipf</span>
<span class="t" style="left:163.90px;top:551.60px;font-family:'Liberation Sans', sans-serif;font-size:15px;color:#000;letter-spacing:-0.153px;">businessfunctions</span>
<span class="t" style="left:181.90px;top:579.60px;font-family:'Liberation Sans', sans-serif;font-size:15px;color:#000;letter-spacing:0.215px;">aggregator</span>
<span class="t" style="left:181.90px;top:607.60px;font-family:'Liberation Sans', sans-serif;font-size:15px;color:#000;letter-spacing:0.088px;">bulker</span>
<span class="t" style="left:181.90px;top:635.60px;font-family:'Liberation Sans', sans-serif;font-size:15px;color:#000;letter-spacing:0.159px;">debulk</span>
<span class="t" style="left:181.90px;top:663.60px;font-family:'Liberation Sans', sans-serif;font-size:15px;color:#000;letter-spacing:0.059px;">duplicatecheck</span>
<span class="t" style="left:181.90px;top:691.60px;font-family:'Liberation Sans', sans-serif;font-size:15px;color:#000;letter-spacing:0.642px;">htm</span>
<span class="t" style="left:181.90px;top:719.60px;font-family:'Liberation Sans', sans-serif;font-size:15px;color:#000;letter-spacing:0.242px;">mapping</span>
<span class="t" style="left:181.90px;top:747.60px;font-family:'Liberation Sans', sans-serif;font-size:15px;color:#000;letter-spacing:0.147px;">multicsm</span>
<span class="t" style="left:181.90px;top:775.60px;font-family:'Liberation Sans', sans-serif;font-size:15px;color:#000;letter-spacing:0.248px;">reachability</span>
<span class="t" style="left:181.90px;top:803.60px;font-family:'Liberation Sans', sans-serif;font-size:15px;color:#000;letter-spacing:-0.243px;">scheduler</span>
<span class="t" style="left:181.90px;top:831.60px;font-family:'Liberation Sans', sans-serif;font-size:15px;color:#000;letter-spacing:0.088px;">bulker</span>
<span class="t" style="left:181.90px;top:859.60px;font-family:'Liberation Sans', sans-serif;font-size:15px;color:#000;letter-spacing:0.159px;">debulk</span>
<span class="t" style="left:199.90px;top:887.60px;font-family:'Liberation Sans', sans-serif;font-size:15px;color:#000;letter-spacing:0.127px;max-width:183.10px;overflow:hidden;padding-bottom:5px;">com.iconsolutions.ipf.businessfunctions</span>
<span class="t" style="left:217.90px;top:915.60px;font-family:'Liberation Sans', sans-serif;font-size:15px;color:#000;letter-spacing:0.430px;">ipfdebulkmodel</span>
<span class="t" style="left:235.90px;top:943.60px;font-family:'Liberation Sans', sans-serif;font-size:15px;color:#000;transform-origin:0 0;transform:scaleX(0.9325);max-width:157.75px;overflow:hidden;padding-bottom:5px;">IPF Debulker Business Data</span>
<span class="t" style="left:235.90px;top:971.60px;font-family:'Liberation Sans', sans-serif;font-size:15px;color:#000;transform-origin:0 0;transform:scaleX(0.9475);max-width:155.26px;overflow:hidden;padding-bottom:5px;">IPF Debulker Decisions</span>
<span class="t" style="left:235.90px;top:999.60px;font-family:'Liberation Sans', sans-serif;font-size:15px;color:#000;letter-spacing:-0.244px;">IPF Debulker Domain</span>
<span class="t" style="left:201.80px;top:131.60px;font-family:'Liberation Sans', sans-serif;font-size:15px;color:#8c8c8c;letter-spacing:0.195px;">(generation required)</span>
<span class="t" style="left:207.20px;top:159.60px;font-family:'Liberation Sans', sans-serif;font-size:15px;color:#8c8c8c;letter-spacing:0.175px;">(generation required)</span>
<span class="t" style="left:332.60px;top:915.60px;font-family:'Liberation Sans', sans-serif;font-size:15px;color:#8c8c8c;letter-spacing:-0.200px;max-width:50.40px;overflow:hidden;padding-bottom:5px;">(read only)</span>
<span class="t" style="left:411.60px;top:104.30px;font-family:'Liberation Sans', sans-serif;font-size:15px;color:#0032a0;letter-spacing:-0.037px;">BulkFlow</span>
<span class="t" style="left:521.80px;top:104.30px;font-family:'Liberation Sans', sans-serif;font-size:15px;color:#000;transform-origin:0 0;transform:scaleX(0.9373);">IPF Debulker Business Data</span>
<span class="t" style="left:749.00px;top:104.30px;font-family:'Liberation Sans', sans-serif;font-size:15px;color:#000;letter-spacing:-0.255px;">IPF Debulker Domain</span>
<span class="t" style="left:436.00px;top:137.00px;font-family:'DejaVu Sans', 'Liberation Sans', sans-serif;font-size:17.2px;color:#6e6e6e;letter-spacing:1.256px;transform-origin:0 0;transform:scaleX(1.0700);-webkit-text-stroke:0.28px #6e6e6e;">Input Behaviour</span>
<span class="t" style="left:436.00px;top:356.00px;font-family:'DejaVu Sans', 'Liberation Sans', sans-serif;font-size:17.2px;color:#6e6e6e;letter-spacing:1.585px;transform-origin:0 0;transform:scaleX(1.0700);-webkit-text-stroke:0.28px #6e6e6e;">Input Enrichers</span>
<span class="t" style="left:436.00px;top:491.00px;font-family:'DejaVu Sans', 'Liberation Sans', sans-serif;font-size:17.2px;color:#6e6e6e;letter-spacing:1.103px;transform-origin:0 0;transform:scaleX(1.0700);-webkit-text-stroke:0.28px #6e6e6e;">Initiation Behaviour</span>
<span class="t" style="left:436.00px;top:749.00px;font-family:'DejaVu Sans', 'Liberation Sans', sans-serif;font-size:17.2px;color:#6e6e6e;letter-spacing:1.211px;transform-origin:0 0;transform:scaleX(1.0700);-webkit-text-stroke:0.28px #6e6e6e;">Event Behaviour</span>
<span class="t" style="left:435.20px;top:184.00px;font-family:'DejaVu Sans', 'Liberation Sans', sans-serif;font-size:13.4px;font-style:italic;color:#8a8a8a;letter-spacing:0.292px;transform-origin:0 0;transform:scaleX(1.1200);-webkit-text-stroke:0.22px #8a8a8a;">Define how inputs should processed and what domain events they translate to.</span>
<span class="t" style="left:435.20px;top:403.00px;font-family:'DejaVu Sans', 'Liberation Sans', sans-serif;font-size:13.4px;font-style:italic;color:#8a8a8a;letter-spacing:0.295px;transform-origin:0 0;transform:scaleX(1.1200);-webkit-text-stroke:0.22px #8a8a8a;">Define the functions that should be applied on the input before an event has been created</span>
<span class="t" style="left:435.20px;top:538.00px;font-family:'DejaVu Sans', 'Liberation Sans', sans-serif;font-size:13.4px;font-style:italic;color:#8a8a8a;letter-spacing:0.244px;transform-origin:0 0;transform:scaleX(1.1200);-webkit-text-stroke:0.22px #8a8a8a;">The behaviour of the flow specifically when it is initiated.  The initiation behaviour</span>
<span class="t" style="left:435.20px;top:560.00px;font-family:'DejaVu Sans', 'Liberation Sans', sans-serif;font-size:13.4px;font-style:italic;color:#8a8a8a;letter-spacing:0.308px;transform-origin:0 0;transform:scaleX(1.1200);-webkit-text-stroke:0.22px #8a8a8a;">defines the required entry data for the flow, the initial state and the first action(s)</span>
<span class="t" style="left:435.20px;top:582.00px;font-family:'DejaVu Sans', 'Liberation Sans', sans-serif;font-size:13.4px;font-style:italic;color:#8a8a8a;letter-spacing:0.257px;transform-origin:0 0;transform:scaleX(1.1200);-webkit-text-stroke:0.22px #8a8a8a;">that should be launched.  A &quot;Flow Initiated&quot; event is provided on initiation.</span>
<span class="t" style="left:435.20px;top:796.00px;font-family:'DejaVu Sans', 'Liberation Sans', sans-serif;font-size:13.4px;font-style:italic;color:#8a8a8a;letter-spacing:0.206px;transform-origin:0 0;transform:scaleX(1.1200);-webkit-text-stroke:0.22px #8a8a8a;">The working model is an event driven finite state machine where we specify an event criteria</span>
<span class="t" style="left:435.20px;top:818.00px;font-family:'DejaVu Sans', 'Liberation Sans', sans-serif;font-size:13.4px;font-style:italic;color:#8a8a8a;letter-spacing:0.306px;transform-origin:0 0;transform:scaleX(1.1200);-webkit-text-stroke:0.22px #8a8a8a;">As an entry condition and define the progression of state and the option to invoke one</span>
<span class="t" style="left:435.20px;top:840.00px;font-family:'DejaVu Sans', 'Liberation Sans', sans-serif;font-size:13.4px;font-style:italic;color:#8a8a8a;letter-spacing:0.309px;transform-origin:0 0;transform:scaleX(1.1200);-webkit-text-stroke:0.22px #8a8a8a;">or more actions.</span>
<span class="t" style="left:471.90px;top:227.00px;font-family:'Liberation Mono', monospace;font-size:13.33px;font-weight:bold;color:#000;">Input</span>
<span class="t" style="left:657.90px;top:227.00px;font-family:'Liberation Mono', monospace;font-size:13.33px;font-weight:bold;color:#000;">Response Code</span>
<span class="t" style="left:775.90px;top:227.00px;font-family:'Liberation Mono', monospace;font-size:13.33px;font-weight:bold;color:#000;">Event Selection</span>
<span class="t" style="left:450.30px;top:247.50px;font-family:'DejaVu Sans', 'Liberation Sans', sans-serif;font-size:12px;font-weight:bold;color:#111;">1</span>
<span class="t" style="left:450.30px;top:268.50px;font-family:'DejaVu Sans', 'Liberation Sans', sans-serif;font-size:12px;font-weight:bold;color:#111;">2</span>
<span class="t" style="left:472.20px;top:246.00px;font-family:'DejaVu Sans', 'Liberation Sans', sans-serif;font-size:13px;color:#111;transform-origin:0 0;transform:scaleX(1.0606);">Initiate Debulk Response</span>
<span class="t" style="left:658.20px;top:246.00px;font-family:'DejaVu Sans', 'Liberation Sans', sans-serif;font-size:13px;color:#111;transform-origin:0 0;transform:scaleX(1.0431);">Rejected</span>
<span class="t" style="left:776.20px;top:246.00px;font-family:'DejaVu Sans', 'Liberation Sans', sans-serif;font-size:13px;color:#111;transform-origin:0 0;transform:scaleX(1.0796);">File Rejected</span>
<span class="t" style="left:472.20px;top:267.00px;font-family:'DejaVu Sans', 'Liberation Sans', sans-serif;font-size:13px;color:#111;transform-origin:0 0;transform:scaleX(1.0606);">Initiate Debulk Response</span>
<span class="t" style="left:658.20px;top:267.00px;font-family:'DejaVu Sans', 'Liberation Sans', sans-serif;font-size:13px;color:#111;transform-origin:0 0;transform:scaleX(1.0568);">Accepted</span>
<span class="t" style="left:776.20px;top:267.00px;font-family:'DejaVu Sans', 'Liberation Sans', sans-serif;font-size:13px;color:#111;transform-origin:0 0;transform:scaleX(1.0661);">Ready For Processing</span>
<span class="t" style="left:449.90px;top:624.50px;font-family:'Liberation Mono', monospace;font-size:13.33px;font-weight:bold;color:#000;">On Received Data</span>
<span class="t" style="left:620.70px;top:624.50px;font-family:'Liberation Mono', monospace;font-size:13.33px;font-weight:bold;color:#000;">Move To State</span>
<span class="t" style="left:738.90px;top:624.50px;font-family:'Liberation Mono', monospace;font-size:13.33px;font-weight:bold;color:#000;">Perform Enrichment</span>
<span class="t" style="left:936.80px;top:624.50px;font-family:'Liberation Mono', monospace;font-size:13.33px;font-weight:bold;color:#000;">Generate Aggregate Data</span>
<span class="t" style="left:1134.70px;top:624.50px;font-family:'Liberation Mono', monospace;font-size:13.33px;font-weight:bold;color:#000;">Perform</span>
<span class="t" style="left:450.20px;top:644.00px;font-family:'DejaVu Sans', 'Liberation Sans', sans-serif;font-size:13px;color:#111;transform-origin:0 0;transform:scaleX(1.0373);">Debulk ID</span>
<span class="t" style="left:450.20px;top:664.00px;font-family:'DejaVu Sans', 'Liberation Sans', sans-serif;font-size:13px;color:#111;transform-origin:0 0;transform:scaleX(1.0450);">Debulk Config Name</span>
<span class="t" style="left:450.20px;top:684.00px;font-family:'DejaVu Sans', 'Liberation Sans', sans-serif;font-size:13px;color:#111;transform-origin:0 0;transform:scaleX(1.0591);">Debulk Source</span>
<span class="t" style="left:450.20px;top:704.00px;font-family:'DejaVu Sans', 'Liberation Sans', sans-serif;font-size:13px;color:#111;transform-origin:0 0;transform:scaleX(1.0852);">Payment Journey Type</span>
<span class="t" style="left:620.70px;top:646.30px;font-family:'Liberation Mono', monospace;font-size:13.33px;color:#111;">Debulking</span>
<span class="t" style="left:738.90px;top:646.30px;font-family:'Liberation Mono', monospace;font-size:13.33px;font-weight:bold;color:#8f8f8f;">&lt;no enrichmentFunction&gt;</span>
<span class="t" style="left:936.80px;top:646.30px;font-family:'Liberation Mono', monospace;font-size:13.33px;font-weight:bold;color:#8f8f8f;">&lt;no aggregateFunction&gt;</span>
<span class="t" style="left:1135.00px;top:644.40px;font-family:'DejaVu Sans', 'Liberation Sans', sans-serif;font-size:13px;font-weight:bold;color:#111;transform-origin:0 0;transform:scaleX(0.9308);">Make Request:</span>
<span class="t" style="left:1244.30px;top:644.40px;font-family:'DejaVu Sans', 'Liberation Sans', sans-serif;font-size:13px;color:#111;transform-origin:0 0;transform:scaleX(1.0647);">Initiate Debulk</span>
<span class="t" style="left:471.70px;top:883.00px;font-family:'Liberation Mono', monospace;font-size:13.33px;font-weight:bold;color:#000;">With Current States</span>
<span class="t" style="left:637.70px;top:883.00px;font-family:'Liberation Mono', monospace;font-size:13.33px;font-weight:bold;color:#000;">When</span>
<span class="t" style="left:683.90px;top:883.00px;font-family:'Liberation Mono', monospace;font-size:13.33px;font-weight:bold;color:#000;">For Event</span>
<span class="t" style="left:844.70px;top:883.00px;font-family:'Liberation Mono', monospace;font-size:13.33px;font-weight:bold;color:#000;">Move to State</span>
<span class="t" style="left:962.70px;top:883.00px;font-family:'Liberation Mono', monospace;font-size:13.33px;font-weight:bold;color:#000;">Perform Action</span>
<span class="t" style="left:450.30px;top:903.50px;font-family:'DejaVu Sans', 'Liberation Sans', sans-serif;font-size:12px;font-weight:bold;color:#111;">1</span>
<span class="t" style="left:450.30px;top:924.50px;font-family:'DejaVu Sans', 'Liberation Sans', sans-serif;font-size:12px;font-weight:bold;color:#111;">2</span>
<span class="t" style="left:472.20px;top:902.00px;font-family:'DejaVu Sans', 'Liberation Sans', sans-serif;font-size:13px;color:#111;transform-origin:0 0;transform:scaleX(1.0342);">Debulking</span>
<span class="t" style="left:638.20px;top:902.00px;font-family:'DejaVu Sans', 'Liberation Sans', sans-serif;font-size:13px;color:#111;transform-origin:0 0;transform:scaleX(0.9630);">On</span>
<span class="t" style="left:684.20px;top:902.00px;font-family:'DejaVu Sans', 'Liberation Sans', sans-serif;font-size:13px;color:#111;transform-origin:0 0;transform:scaleX(1.0661);">Ready For Processing</span>
<span class="t" style="left:844.70px;top:904.30px;font-family:'Liberation Mono', monospace;font-size:13.33px;color:#111;">Complete</span>
<span class="t" style="left:472.20px;top:923.00px;font-family:'DejaVu Sans', 'Liberation Sans', sans-serif;font-size:13px;color:#111;transform-origin:0 0;transform:scaleX(1.0342);">Debulking</span>
<span class="t" style="left:638.20px;top:923.00px;font-family:'DejaVu Sans', 'Liberation Sans', sans-serif;font-size:13px;color:#111;transform-origin:0 0;transform:scaleX(0.9630);">On</span>
<span class="t" style="left:684.20px;top:923.00px;font-family:'DejaVu Sans', 'Liberation Sans', sans-serif;font-size:13px;color:#111;transform-origin:0 0;transform:scaleX(1.0796);">File Rejected</span>
<span class="t" style="left:844.70px;top:925.20px;font-family:'Liberation Mono', monospace;font-size:13.33px;color:#111;">Rejected</span>
<span class="t" style="left:456.00px;top:309.60px;font-family:'Liberation Sans', sans-serif;font-size:13px;color:#f59f12;letter-spacing:0.566px;">Add Input Behaviour</span>
<span class="t" style="left:456.00px;top:445.30px;font-family:'Liberation Sans', sans-serif;font-size:13px;color:#f59f12;letter-spacing:0.607px;">Add Input Enricher</span>
<span class="t" style="left:456.00px;top:965.80px;font-family:'Liberation Sans', sans-serif;font-size:13px;color:#f59f12;letter-spacing:0.492px;">Add Event Behaviour</span>
<span class="t" style="left:1678.60px;top:117.30px;font-family:'Liberation Sans', sans-serif;font-size:13px;color:#000;letter-spacing:-0.109px;transform-origin:0 11.00px;transform:rotate(90deg);">Notifications</span>
<span class="t" style="left:1678.60px;top:228.70px;font-family:'Liberation Sans', sans-serif;font-size:13px;color:#000;transform-origin:0 11.00px;transform:rotate(90deg) scaleX(0.9637);">Context Actions 2</span>
<span class="t" style="left:1678.60px;top:353.00px;font-family:'Liberation Sans', sans-serif;font-size:13px;color:#000;letter-spacing:-0.145px;transform-origin:0 11.00px;transform:rotate(90deg);">Context Actions</span>
<span class="t" style="left:64.00px;top:1018.70px;font-family:'Liberation Sans', sans-serif;font-size:13px;color:#000;letter-spacing:-0.064px;">Version Control</span>
<span class="t" style="left:192.00px;top:1018.70px;font-family:'Liberation Sans', sans-serif;font-size:13px;color:#000;transform-origin:0 0;transform:scaleX(0.8734);">Usages</span>
<span class="t" style="left:266.00px;top:1018.70px;font-family:'Liberation Sans', sans-serif;font-size:13px;color:#000;letter-spacing:-0.120px;">ToDo</span>
<span class="t" style="left:333.00px;top:1018.70px;font-family:'Liberation Sans', sans-serif;font-size:13px;color:#000;transform-origin:0 0;transform:scaleX(0.9030);">Messages</span>
<span class="t" style="left:425.00px;top:1018.70px;font-family:'Liberation Sans', sans-serif;font-size:13px;color:#000;transform-origin:0 0;transform:scaleX(0.9119);">Console</span>
<span class="t" style="left:489.00px;top:1018.70px;font-family:'Liberation Sans', sans-serif;font-size:13px;color:#000;transform-origin:0 0;transform:scaleX(0.9435);">Chart</span>
<span class="t" style="left:556.00px;top:1018.70px;font-family:'Liberation Sans', sans-serif;font-size:13px;color:#000;letter-spacing:0.054px;">Terminal</span>
<span class="t" style="left:1609.60px;top:1018.70px;font-family:'Liberation Sans', sans-serif;font-size:13px;color:#000;letter-spacing:-0.123px;">Inspector</span>
<span class="t" style="left:1316.50px;top:1040.60px;font-family:'Liberation Sans', sans-serif;font-size:15px;color:#000;letter-spacing:-0.276px;">1125 of 18272</span>
<span class="t" style="left:1461.00px;top:1043.00px;font-family:'Liberation Sans', sans-serif;font-size:12px;color:#000;transform-origin:0 0;transform:scaleX(0.9370);">:ON</span>
<span class="t" style="left:1523.00px;top:1043.00px;font-family:'Liberation Sans', sans-serif;font-size:12px;color:#000;transform-origin:0 0;transform:scaleX(0.8849);">ISolvables</span>
<span class="t" style="left:1587.00px;top:1040.60px;font-family:'Liberation Sans', sans-serif;font-size:15px;color:#000;transform-origin:0 0;transform:scaleX(0.9642);">1512 of 8192M</span>
<div style="position:absolute;left:368px;top:950px;width:15px;height:2px;background:#f2c51d"></div>
<div style="position:absolute;left:14px;top:49px;width:1px;height:49px;background:#fbfbfb"></div>
<div style="position:absolute;left:14px;top:175px;width:1px;height:887px;background:#fbfbfb"></div>
<div style="position:absolute;left:1693px;top:49px;width:1px;height:1013px;background:#fbfbfb"></div>
<div style="position:absolute;left:14px;top:1061px;width:1680px;height:1px;background:#fbfbfb"></div>
</body></html>
